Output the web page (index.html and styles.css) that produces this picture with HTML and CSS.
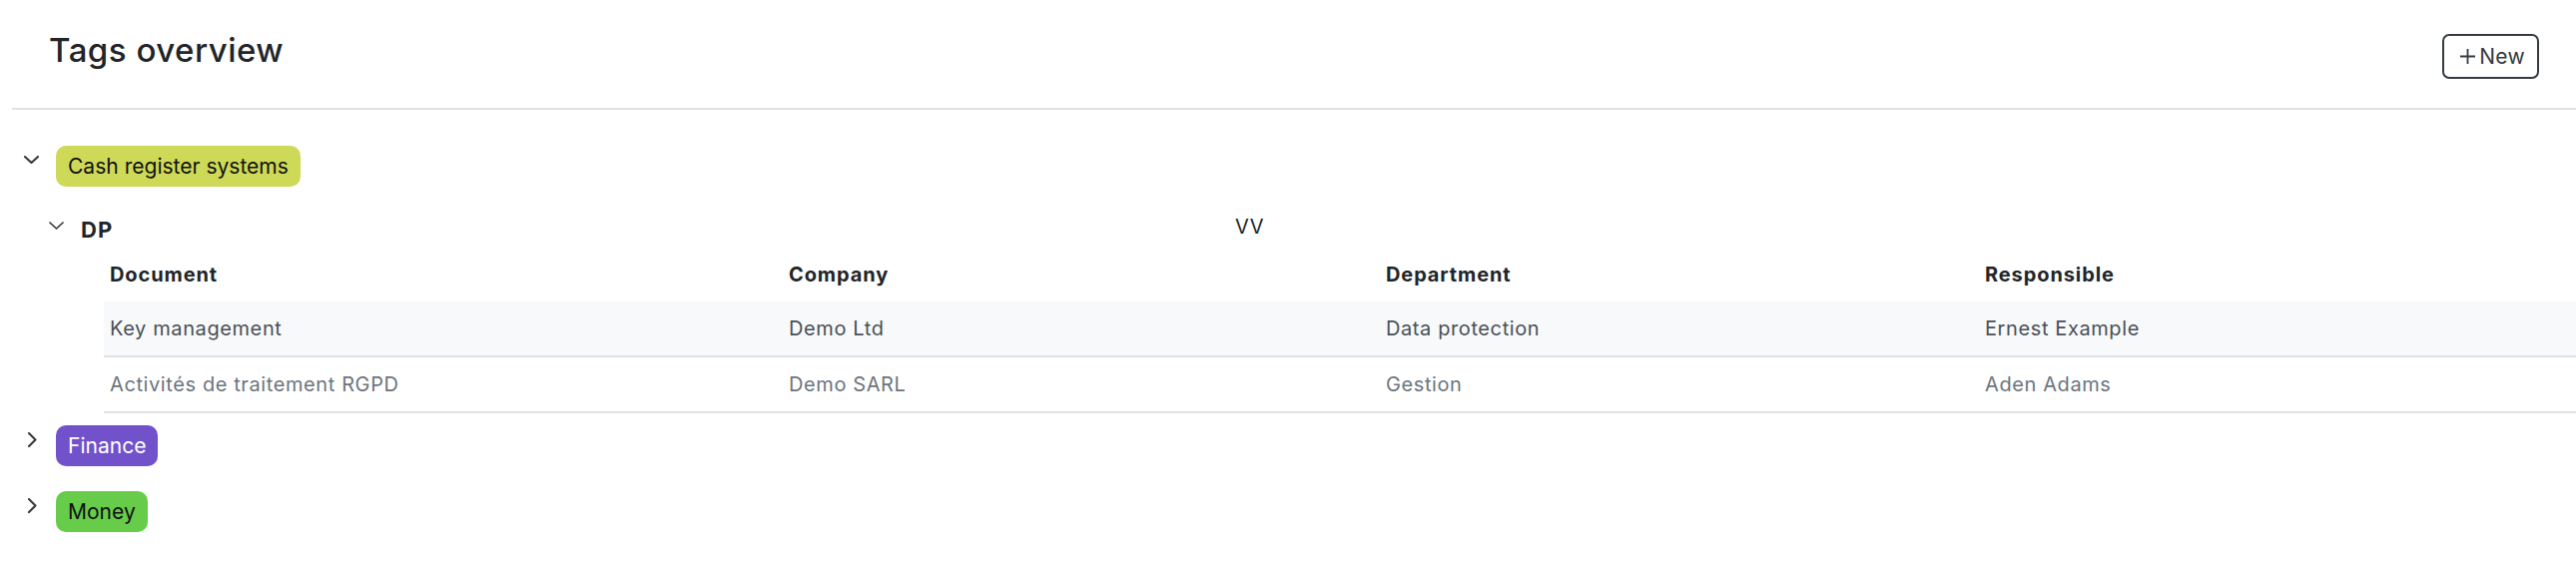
FILE: index.html
```html
<!DOCTYPE html>
<html lang="en">
<head>
<meta charset="utf-8">
<title>Tags overview</title>
<link rel="stylesheet" href="styles.css">
</head>
<body>
<header class="page-header">
  <h1 class="title">Tags overview</h1>
  <button class="btn-new" type="button">
    <svg class="plus" width="17" height="17" viewBox="0 0 17 17"><path d="M8.5 1v15M1 8.5h15" stroke="currentColor" stroke-width="1.8" fill="none"/></svg>
    <span>New</span>
  </button>
</header>

<main class="groups">
  <section class="group">
    <div class="group-head">
      <span class="toggle"><svg class="chev-down" width="15" height="8" viewBox="0 0 15 8"><polyline points="1,1 7.5,7 14,1" fill="none" stroke="currentColor" stroke-width="2.1" stroke-linecap="round" stroke-linejoin="round"/></svg></span>
      <span class="badge badge-cash">Cash register systems</span>
    </div>
    <div class="subgroup">
      <div class="sub-head">
        <span class="toggle"><svg class="chev-down-sm" width="15" height="8" viewBox="0 0 15 8"><polyline points="1,1 7.5,7 14,1" fill="none" stroke="currentColor" stroke-width="1.7" stroke-linecap="round" stroke-linejoin="round"/></svg></span>
        <span class="sub-title">DP</span>
        <span class="sub-extra">VV</span>
      </div>
      <table class="docs">
        <thead>
          <tr>
            <th class="c-doc">Document</th>
            <th class="c-company">Company</th>
            <th class="c-dept">Department</th>
            <th class="c-resp">Responsible</th>
          </tr>
        </thead>
        <tbody>
          <tr class="row-a">
            <td>Key management</td>
            <td>Demo Ltd</td>
            <td>Data protection</td>
            <td>Ernest Example</td>
          </tr>
          <tr class="row-b">
            <td>Activités de traitement RGPD</td>
            <td>Demo SARL</td>
            <td>Gestion</td>
            <td>Aden Adams</td>
          </tr>
        </tbody>
      </table>
    </div>
  </section>

  <section class="group">
    <div class="group-head">
      <span class="toggle"><svg class="chev-right" width="9" height="15" viewBox="0 0 9 15"><polyline points="1,1 7.5,7.5 1,14" fill="none" stroke="currentColor" stroke-width="2.1" stroke-linecap="round" stroke-linejoin="round"/></svg></span>
      <span class="badge badge-finance">Finance</span>
    </div>
  </section>

  <section class="group">
    <div class="group-head">
      <span class="toggle"><svg class="chev-right" width="9" height="15" viewBox="0 0 9 15"><polyline points="1,1 7.5,7.5 1,14" fill="none" stroke="currentColor" stroke-width="2.1" stroke-linecap="round" stroke-linejoin="round"/></svg></span>
      <span class="badge badge-money">Money</span>
    </div>
  </section>
</main>
</body>
</html>
```

FILE: styles.css
```css
* { box-sizing: border-box; }

html, body {
  margin: 0;
  padding: 0;
  background: #ffffff;
}

body {
  font-family: "Inter", "Noto Sans", "Liberation Sans", sans-serif;
  color: #212529;
}

.page-header {
  margin-left: 12px;
  height: 110px;
  padding: 0 37px;
  display: flex;
  justify-content: space-between;
  align-items: flex-start;
  border-bottom: 2px solid #dee2e6;
}

.title {
  margin: 30px 0 0;
  font-size: 33px;
  line-height: 40px;
  font-weight: 500;
  color: #212529;
  letter-spacing: 0.5px;
}

.btn-new {
  margin-top: 34px;
  height: 45px;
  padding: 0 12px 0 15px;
  display: flex;
  align-items: center;
  gap: 3px;
  border: 2px solid #343a40;
  border-radius: 7px;
  background: #ffffff;
  color: #343a40;
  font-family: inherit;
  font-size: 21px;
  line-height: 1;
  letter-spacing: 0.3px;
}

.plus { display: block; }

.groups {
  padding-top: 36px;
}

.group {
  padding-left: 24px;
  padding-bottom: 12px;
}

.group-head {
  display: flex;
  align-items: flex-start;
  padding-bottom: 13px;
}

.toggle {
  flex: 0 0 32px;
  display: flex;
  color: #343a40;
}

.chev-down { margin-top: 10px; }
.chev-right { margin-top: 7px; margin-left: 4px; }
.chev-down-sm { margin-top: 6px; }

.badge {
  height: 41px;
  padding: 0 12px;
  border-radius: 10px;
  font-size: 21px;
  line-height: 41px;
  letter-spacing: 0.02px;
  white-space: nowrap;
}

.badge-cash { background: #cdd957; color: #111111; }
.badge-finance { background: #7152cb; color: #ffffff; }
.badge-money { background: #66cc4a; color: #111111; }

.subgroup {
  padding-left: 25px;
}

.sub-head {
  display: flex;
  align-items: flex-start;
  margin-top: 16px;
}

.sub-title {
  flex: 0 0 1156px;
  font-size: 22px;
  line-height: 28px;
  font-weight: 700;
  letter-spacing: 1px;
  color: #212529;
}

.sub-extra {
  font-size: 20px;
  line-height: 22px;
  letter-spacing: 0.6px;
  color: #212529;
}

.docs {
  margin-top: 8px;
  margin-left: 55px;
  width: 2476px;
  table-layout: fixed;
  border-collapse: collapse;
  font-size: 20px;
  line-height: 30px;
  letter-spacing: 0.6px;
}

.docs th {
  text-align: left;
  font-weight: 700;
  color: #212529;
  padding: 8px 6px 12px;
  letter-spacing: 0.9px;
}

.c-doc { width: 680px; }
.c-company { width: 598px; }
.c-dept { width: 600px; }
.c-resp { width: 598px; }

.docs td {
  padding: 12px 6px;
  border-bottom: 2px solid #dee2e6;
  white-space: nowrap;
}

.row-a td {
  background: #f8f9fa;
  color: #495057;
}

.row-b td {
  color: #6c757d;
}
```
